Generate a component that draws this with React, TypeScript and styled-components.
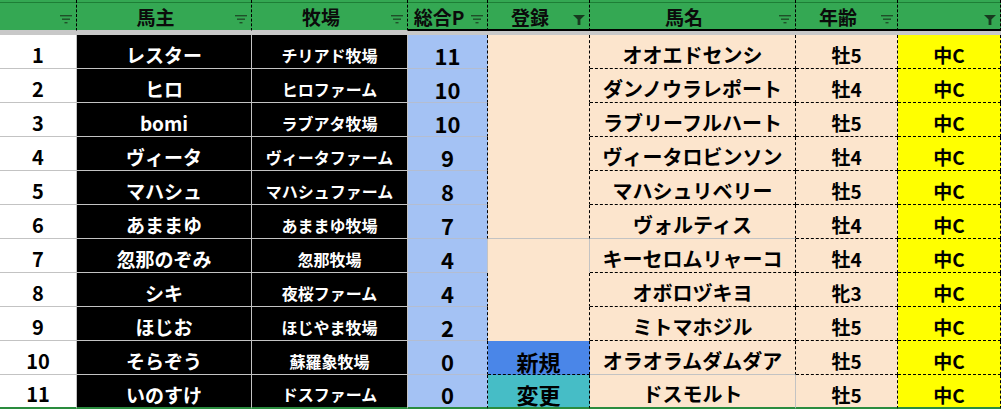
import React from "react";
import styled, { createGlobalStyle } from "styled-components";

const GlobalStyle = createGlobalStyle`
  html, body { margin: 0; padding: 0; background: #ffffff; }
  body { font-family: "Noto Sans CJK JP", "Noto Sans", sans-serif; }
`;

const GREEN = "#34a853";
const GREEN_DARK = "#1e7e36";
const GRAY = "1px solid #c3c3c3";
const BLUEGRAY = "1px solid #b4bdd0";
const DASH = "1px dashed #000000";
const CLEAR = "1px solid transparent";

const Sheet = styled.div`
  display: grid;
  grid-template-columns: 77px 175px 156px 80px 102px 206px 102px 103px;
  width: 1001px;
  font-weight: 700;
`;

const HeadCell = styled.div<{ $thick: boolean }>`
  box-sizing: border-box;
  height: 31px;
  display: flex;
  align-items: stretch;
  background: linear-gradient(${GREEN} 0 2px, ${GREEN_DARK} 2px 3px, ${GREEN} 3px);
  border-right: ${DASH};
  border-bottom: ${(p) => (p.$thick ? "2px solid #000" : "1px solid #c8c8c8")};
`;

const HeadLabel = styled.span`
  flex: 1;
  display: flex;
  align-items: center;
  justify-content: center;
  padding-top: 3px;
  font-size: 19px;
  line-height: 1;
  color: #0b0b0b;
  white-space: nowrap;
`;

const FilterSlot = styled.span`
  width: 17px;
  display: flex;
  align-items: flex-start;
  padding-top: 15px;
  padding-left: 1px;
  box-sizing: border-box;
`;

const Band = styled.div`
  grid-column: 1 / -1;
  height: 4px;
  background: #c8c8c8;
`;

const Cell = styled.div<{
  $bg: string;
  $fg: string;
  $size: number;
  $right: string;
  $bottom: string;
}>`
  box-sizing: border-box;
  height: 34px;
  display: flex;
  align-items: center;
  justify-content: center;
  padding-top: 6px;
  background: ${(p) => p.$bg};
  color: ${(p) => p.$fg};
  font-size: ${(p) => p.$size}px;
  line-height: 1;
  border-right: ${(p) => p.$right};
  border-bottom: ${(p) => p.$bottom};
  white-space: nowrap;
  overflow: hidden;
`;

const FilterLines = () => (
  <svg width="12" height="9" viewBox="0 0 12 9">
    <rect x="0" y="0" width="12" height="1.4" fill="#1f4f29" />
    <rect x="2" y="3.5" width="8" height="1.4" fill="#1f4f29" />
    <rect x="4.5" y="7" width="3" height="1.4" fill="#1f4f29" />
  </svg>
);

const FilterFunnel = () => (
  <svg width="12" height="10" viewBox="0 0 12 10">
    <path d="M0 0 H12 L7.4 4.6 V10 H4.6 V4.6 Z" fill="#173a1f" />
  </svg>
);

type Head = { label: string; active?: boolean; thick: boolean };

const heads: Head[] = [
  { label: "", thick: false },
  { label: "馬主", thick: false },
  { label: "牧場", thick: false },
  { label: "総合P", thick: true },
  { label: "登録", active: true, thick: true },
  { label: "馬名", thick: true },
  { label: "年齢", thick: true },
  { label: "", active: true, thick: true },
];

type Entry = {
  no: number;
  owner: string;
  farm: string;
  pts: number;
  reg: "" | "新規" | "変更";
  horse: string;
  age: string;
  cls: string;
};

const entries: Entry[] = [
  { no: 1, owner: "レスター", farm: "チリアド牧場", pts: 11, reg: "", horse: "オオエドセンシ", age: "牡5", cls: "中C" },
  { no: 2, owner: "ヒロ", farm: "ヒロファーム", pts: 10, reg: "", horse: "ダンノウラレポート", age: "牡4", cls: "中C" },
  { no: 3, owner: "bomi", farm: "ラブアタ牧場", pts: 10, reg: "", horse: "ラブリーフルハート", age: "牡5", cls: "中C" },
  { no: 4, owner: "ヴィータ", farm: "ヴィータファーム", pts: 9, reg: "", horse: "ヴィータロビンソン", age: "牡4", cls: "中C" },
  { no: 5, owner: "マハシュ", farm: "マハシュファーム", pts: 8, reg: "", horse: "マハシュリベリー", age: "牡5", cls: "中C" },
  { no: 6, owner: "あままゆ", farm: "あままゆ牧場", pts: 7, reg: "", horse: "ヴォルティス", age: "牡4", cls: "中C" },
  { no: 7, owner: "忽那のぞみ", farm: "忽那牧場", pts: 4, reg: "", horse: "キーセロムリャーコ", age: "牡4", cls: "中C" },
  { no: 8, owner: "シキ", farm: "夜桜ファーム", pts: 4, reg: "", horse: "オボロヅキヨ", age: "牝3", cls: "中C" },
  { no: 9, owner: "ほじお", farm: "ほじやま牧場", pts: 2, reg: "", horse: "ミトマホジル", age: "牡5", cls: "中C" },
  { no: 10, owner: "そらぞう", farm: "蘇羅象牧場", pts: 0, reg: "新規", horse: "オラオラムダムダア", age: "牡5", cls: "中C" },
  { no: 11, owner: "いのすけ", farm: "ドスファーム", pts: 0, reg: "変更", horse: "ドスモルト", age: "牡5", cls: "中C" },
];

const PEACH = "#fce5cd";
const regBg = (r: Entry["reg"]) => (r === "新規" ? "#4a86e8" : r === "変更" ? "#46bdc6" : PEACH);

const EndRule = "2px solid #2a8c3e";

export default function App() {
  return (
    <>
      <GlobalStyle />
      <Sheet>
        {heads.map((h, i) => (
          <HeadCell key={`h${i}`} $thick={h.thick}>
            <HeadLabel>{h.label}</HeadLabel>
            <FilterSlot>{h.active ? <FilterFunnel /> : <FilterLines />}</FilterSlot>
          </HeadCell>
        ))}
        <Band />
        {entries.map((e) => {
          const last = e.no === 11;
          const base = last ? EndRule : GRAY;
          const dashB = last ? EndRule : DASH;
          const eBottom = last
            ? EndRule
            : e.no === 6
            ? GRAY
            : e.no === 10
            ? DASH
            : CLEAR;
          const fBottom = last ? EndRule : e.no === 6 || e.no === 10 ? GRAY : DASH;
          return (
            <React.Fragment key={e.no}>
              <Cell $bg="#ffffff" $fg="#000" $size={20} $right={GRAY} $bottom={base}>
                {e.no}
              </Cell>
              <Cell $bg="#000000" $fg="#ffffff" $size={19} $right={GRAY} $bottom={base}>
                {e.owner}
              </Cell>
              <Cell $bg="#000000" $fg="#ffffff" $size={16} $right={GRAY} $bottom={base}>
                {e.farm}
              </Cell>
              <Cell
                $bg="#a4c2f4"
                $fg="#000"
                $size={22}
                $right={e.no === 7 ? GRAY : DASH}
                $bottom={last ? EndRule : BLUEGRAY}
              >
                {e.pts}
              </Cell>
              <Cell
                $bg={regBg(e.reg)}
                $fg="#000"
                $size={22}
                $right={e.no === 7 ? GRAY : DASH}
                $bottom={eBottom}
              >
                {e.reg}
              </Cell>
              <Cell
                $bg={PEACH}
                $fg="#000"
                $size={20}
                $right={last ? GRAY : DASH}
                $bottom={fBottom}
              >
                {e.horse}
              </Cell>
              <Cell $bg={PEACH} $fg="#000" $size={19} $right={DASH} $bottom={dashB}>
                {e.age}
              </Cell>
              <Cell $bg="#ffff00" $fg="#000" $size={19} $right={DASH} $bottom={dashB}>
                {e.cls}
              </Cell>
            </React.Fragment>
          );
        })}
      </Sheet>
    </>
  );
}
